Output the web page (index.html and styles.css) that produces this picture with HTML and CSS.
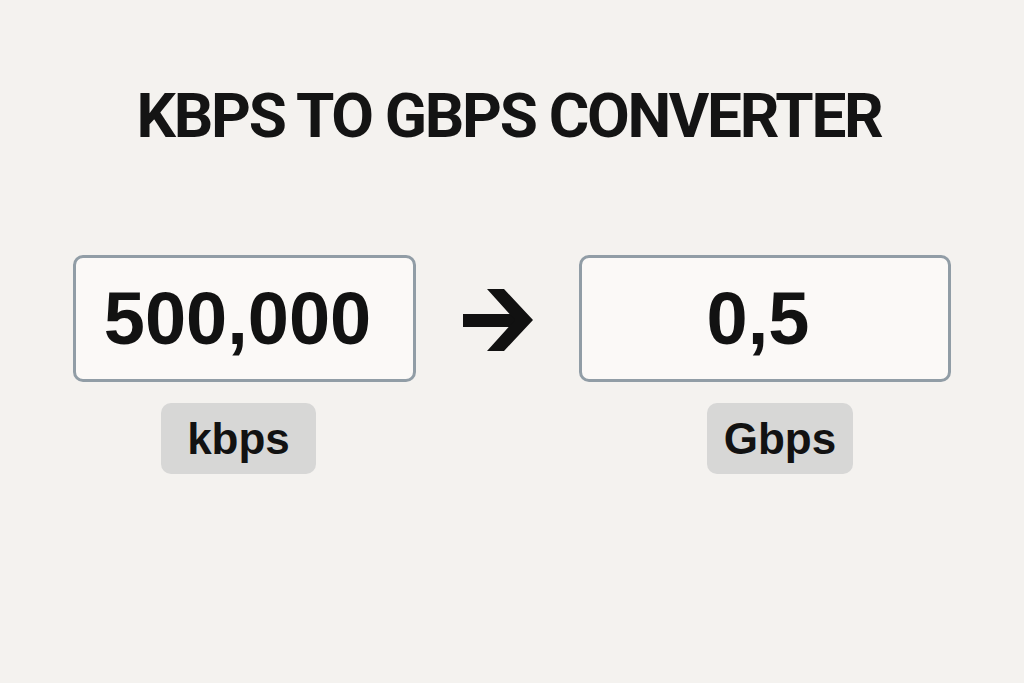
FILE: index.html
```html
<!DOCTYPE html>
<html lang="en">
<head>
<meta charset="utf-8">
<title>Kbps to Gbps Converter</title>
<link rel="stylesheet" href="styles.css">
</head>
<body>
<main class="page">
  <h1 class="title">KBPS TO GBPS CONVERTER</h1>
  <div class="row">
    <div class="col col-in">
      <div class="box box-in">500,000</div>
      <div class="unit unit-in">kbps</div>
    </div>
    <div class="arrow">
      <svg width="70" height="62" viewBox="0 0 70 62" aria-hidden="true">
        <rect x="0" y="25" width="56" height="13" fill="#111"/>
        <polygon points="24,0 41,0 70,31 41,62 24,62 52,31" fill="#111"/>
      </svg>
    </div>
    <div class="col col-out">
      <div class="box box-out">0,5</div>
      <div class="unit unit-out">Gbps</div>
    </div>
  </div>
</main>
</body>
</html>
```

FILE: styles.css
```css
html, body {
  margin: 0;
  padding: 0;
}
body {
  background: #f4f2ef;
  width: 1024px;
  height: 683px;
  overflow: hidden;
  font-family: "Liberation Sans", Arial, sans-serif;
  color: #111;
}
.page {
  display: flex;
  flex-direction: column;
  padding-top: 85px;
}
.title {
  margin: 0;
  font-family: Roboto, "Liberation Sans", sans-serif;
  font-weight: 700;
  font-size: 62px;
  line-height: 1;
  letter-spacing: -2.3px;
  text-align: center;
  padding-right: 6px;
  color: #141414;
}
.row {
  display: flex;
  align-items: flex-start;
  margin-top: 108px;
  padding-left: 73px;
}
.col {
  display: flex;
  flex-direction: column;
  align-items: flex-start;
  gap: 21px;
}
.box {
  box-sizing: border-box;
  height: 127px;
  border: 3px solid #919da6;
  border-radius: 10px;
  background: #fbf9f7;
  display: flex;
  align-items: center;
  justify-content: center;
  font-weight: 700;
  font-size: 74px;
  line-height: 1;
  color: #121212;
}
.box-in {
  width: 343px;
  padding-right: 14px;
}
.box-out {
  width: 372px;
  padding-right: 14px;
}
.arrow {
  height: 127px;
  display: flex;
  align-items: center;
  margin: 0 46px 0 47px;
}
.arrow svg {
  display: block;
  margin-top: 2px;
}
.unit {
  box-sizing: border-box;
  height: 71px;
  border-radius: 10px;
  background: #d7d7d6;
  display: flex;
  align-items: center;
  justify-content: center;
  font-weight: 700;
  font-size: 44px;
  line-height: 1;
  color: #121212;
}
.unit-in {
  width: 155px;
  margin-left: 88px;
}
.unit-out {
  width: 146px;
  margin-left: 128px;
}
```
